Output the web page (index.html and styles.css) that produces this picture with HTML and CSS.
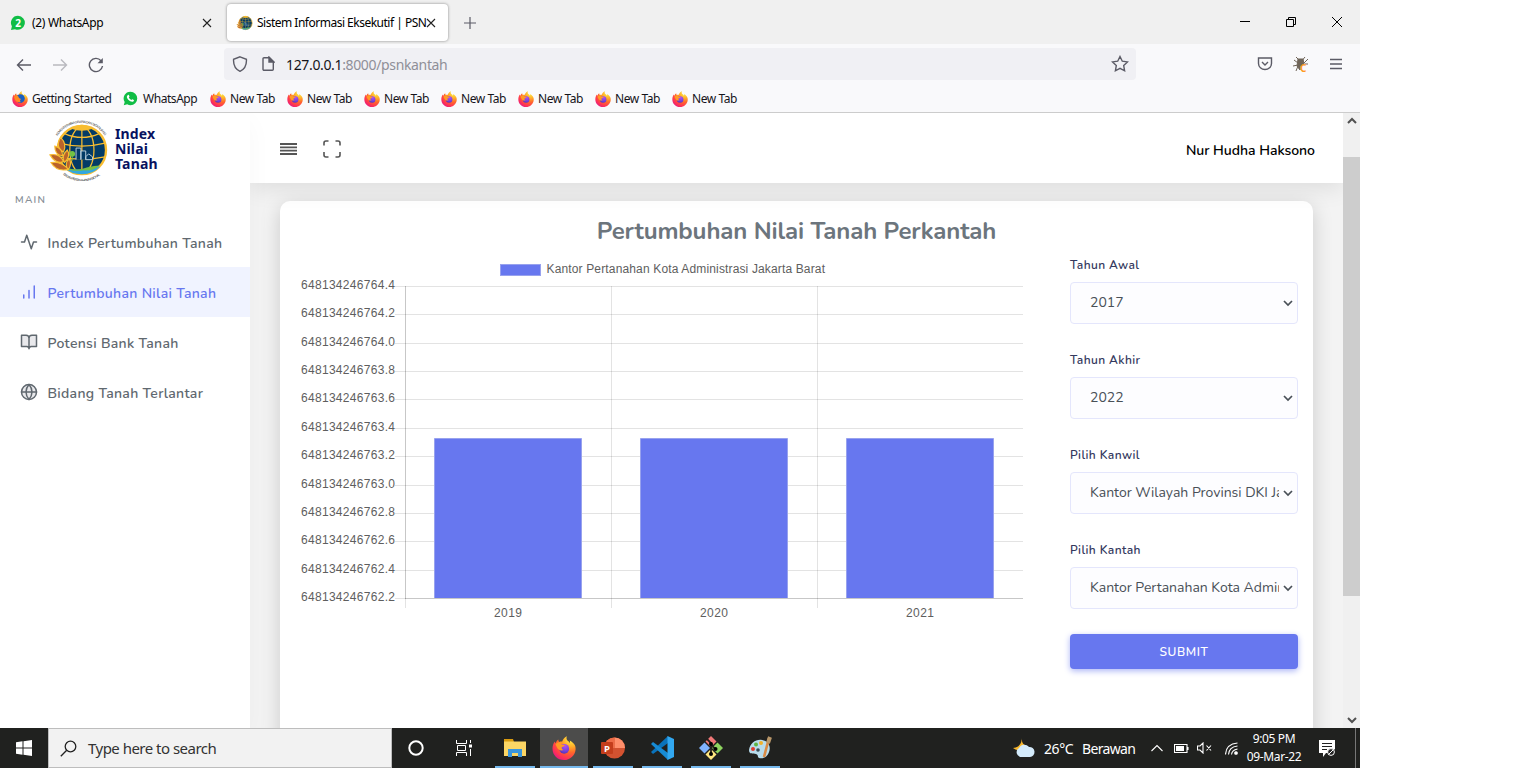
FILE: index.html
```html
<!DOCTYPE html>
<html lang="id">
<head>
<meta charset="utf-8">
<title>Sistem Informasi Eksekutif | PSN</title>
<link rel="stylesheet" href="styles.css">
</head>
<body>
<svg class="defs" width="0" height="0">
  <defs>
    <radialGradient id="ffBody" cx=".8" cy=".1" r="1.05">
      <stop offset="0" stop-color="#fff44f"/><stop offset=".3" stop-color="#ffb52a"/><stop offset=".55" stop-color="#ff6a2a"/><stop offset=".8" stop-color="#ff3650"/><stop offset="1" stop-color="#e31587"/>
    </radialGradient>
    <radialGradient id="ffGlobe" cx=".6" cy=".2" r=".9">
      <stop offset="0" stop-color="#b053f0"/><stop offset=".6" stop-color="#7540dd"/><stop offset="1" stop-color="#4a32a8"/>
    </radialGradient>
    <symbol id="firefox" viewBox="0 0 24 24">
      <path fill="url(#ffBody)" d="M15 .3c-.8 1.500-.6 2.700.2 4 1.200 1 2 1.600 2.800 3 .2-1 0-2-.4-2.700C21.600 6.600 24 9.500 23.600 13.400 23.100 19.500 18 24 12 24 5.500 24 .5 19 .5 12.700c0-3 .8-5.300 2.300-7.300.1.800.3 1.400.7 1.900C4.100 5.700 5 4.400 6.300 3.500c0 1 .3 1.900.9 2.500 1-.4 2-.5 3-.4C11 3 12.800 1.100 15 .3z"/>
      <circle cx="12.200" cy="12.800" r="4.900" fill="url(#ffGlobe)"/>
      <path fill="#ff9a24" d="M3.500 8.500c2-2.200 4.500-2.800 7-2.100-1 .6-1.400 1.200-1.500 2l3.800.6c-.2 1.500-2.300 1.500-3 2.300-.5 1 .3 2.200 1.700 2.700-2.700 1.200-5.600-.2-6.700-3z"/>
    </symbol>
    <symbol id="whatsapp" viewBox="0 0 16 16">
      <path fill="#10bd45" d="M8 .7a7.200 7.200 0 0 1 0 14.400 7.500 7.500 0 0 1-3.500-.9L.8 15.300l1-3.600A7.200 7.200 0 0 1 8 .7z"/>
      <path fill="#fff" d="M5.300 4.200c.5-.4.900-.1 1.100.4l.5 1.200c.1.500-.5.800-.7 1.200.6 1.200 1.500 2 2.800 2.600.4-.2.700-.9 1.100-.8l1.400.7c.4.300.1 1-.2 1.400-1 1-2.300.7-3.600.1-1.500-.8-2.900-2.200-3.500-4-.3-1.100.2-2.200 1.100-2.800z"/>
    </symbol>
    <symbol id="emblem" viewBox="0 0 60 60">
      <circle cx="34" cy="30" r="25" fill="#033b66" stroke="#f8bd31" stroke-width="2.400"/>
      <g fill="none" stroke="#f8bd31" stroke-width="1.300">
        <ellipse cx="34" cy="30" rx="12.500" ry="24"/><path d="M34 6v48M16 13q18 8 36 0M10 23q24 6 48 0M10 37q24 5 48 0"/>
      </g>
      <path d="M26 6q8-4 16 0l3 2q-11 4-22 0z" fill="#f8bd31"/>
      <g fill="#033b66" stroke="#bcd0de" stroke-width="1"><path d="M28 40V28h5v12M33 40V31h5v9M38 40v-3l3-3 4 3v3z"/></g>
      <circle cx="24" cy="34" r="3" fill="#73c444"/><path d="M24 36v5" stroke="#73c444"/>
      <path d="M15 48q18 5 38-1-7 8-19 8-11 0-19-7z" fill="#32a7df"/>
      <path d="M13 46q14 7 26 2 8-2 14-2-8 6-17 5-12 2-21-3z" fill="#75bd43"/>
      <g fill="#ba632b" stroke="#f8bd31" stroke-width="1.200"><path d="M12 17q7 7 3 15-9-5-3-15zM6 26q8 2 8 10-8-1-8-10zM1 35q10-2 14 7-8 3-14-7zM2 43q10-2 18 7-12 3-18-7zM19 30q4 6-3 13-4-7 3-13zM21 39q3 6-1 11-5-5 1-11z"/></g>
    </symbol>
  </defs>
</svg>

<div class="desktop">
  <div class="tabstrip">
    <div class="tab">
      <svg width="16" height="16" viewBox="0 0 16 16"><path fill="#10bd45" d="M8 .8a7 7 0 1 1-3 13.400L1 15l.9-3.700A7 7 0 0 1 8 .8z"/><text x="8" y="11.800" text-anchor="middle" class="badge-num">2</text></svg>
      <span class="tab-title t-wa">(2) WhatsApp</span>
      <svg class="close" width="10" height="10" viewBox="0 0 10 10"><path d="M1 1l8 8M9 1l-8 8"/></svg>
    </div>
    <div class="tab active">
      <svg width="17" height="16"><use href="#emblem" width="17" height="16"/></svg>
      <span class="tab-title t-sie">Sistem Informasi Eksekutif | PSN</span>
      <svg class="close" width="10" height="10" viewBox="0 0 10 10"><path d="M1 1l8 8M9 1l-8 8"/></svg>
    </div>
    <svg class="newtab" width="12" height="12" viewBox="0 0 12 12"><path d="M6 0v12M0 6h12"/></svg>
    <div class="winbtns">
      <svg width="10" height="10" viewBox="0 0 10 10"><path d="M0 4.500h10"/></svg>
      <svg width="10" height="10" viewBox="0 0 10 10"><path d="M.5 2.500h7v7h-7zM2.500 2.500v-2h7v7h-2"/></svg>
      <svg width="10" height="10" viewBox="0 0 10 10"><path d="M0 0l10 10M10 0L0 10"/></svg>
    </div>
  </div>

  <div class="toolbar">
    <div class="navbtns">
      <svg width="16" height="16" viewBox="0 0 16 16"><path d="M15 8H1.500M7 2.500L1.500 8 7 13.500"/></svg>
      <svg class="dim" width="16" height="16" viewBox="0 0 16 16"><path d="M1 8h13.500M9 2.500L14.500 8 9 13.500"/></svg>
      <svg width="16" height="16" viewBox="0 0 16 16"><path d="M14.500 9A6.600 6.600 0 1 1 13 3.700"/><path d="M14.800 1v5.300H9.500z" fill="#5b5b66" stroke="none"/></svg>
    </div>
    <div class="urlbar">
      <svg width="16" height="16" viewBox="0 0 16 16"><path d="M8 .8l6.400 2.500c.4 5.500-1.700 9.700-6.400 12C3.300 13 1.200 8.800 1.600 3.300z"/></svg>
      <svg width="14" height="16" viewBox="0 0 14 16"><path d="M3 1.700h5l4.300 4.300v7.300a1 1 0 0 1-1 1H3a1 1 0 0 1-1-1V2.700a1 1 0 0 1 1-1z"/><path d="M8 1v5h5z" fill="#5b5b66"/></svg>
      <span class="url">127.0.0.1<span>:8000/psnkantah</span></span>
      <svg class="star" width="18" height="18" viewBox="0 0 18 18"><path d="M9 1.500l2.300 4.700 5.200.7-3.800 3.700.9 5.200L9 13.300l-4.600 2.500.9-5.200L1.500 6.900l5.200-.7z"/></svg>
    </div>
    <div class="toolicons">
      <svg width="16" height="16" viewBox="0 0 16 16"><path d="M1.500 2h13v5.500a6.500 6 0 0 1-13 0zM5 6l3 3 3-3"/></svg>
      <svg class="bug" width="16" height="17" viewBox="0 0 16 17"><path d="M3 1l3 3M12 1L9.500 4M1 4l4 3M15 3l-4 4M0 10l5-1M3 15l2-5M12 8l3 0"/><path fill="#6f6458" d="M5 3h5l1 5-4 2v4l-3-4z"/><text x="7" y="15.500">C</text></svg>
      <svg width="14" height="12" viewBox="0 0 14 12"><path d="M1 1.500h12M1 6h12M1 10.500h12"/></svg>
    </div>
  </div>

  <div class="bookmarks">
    <span class="bm b1"><svg width="16" height="16"><use href="#firefox" width="16" height="16"/><circle cx="8.500" cy="7.500" r="4.300" fill="#1b5fc0"/><path d="M2 6q4-3 5 1l2 1q-2 2 0 3-4 1-6-2z" fill="#ff8a20"/></svg><span>Getting Started</span></span>
    <span class="bm b2"><svg width="16" height="16"><use href="#whatsapp" width="15" height="15"/></svg><span>WhatsApp</span></span>
    <span class="bm"><svg width="16" height="16"><use href="#firefox" width="16" height="16"/></svg><span>New Tab</span></span>
    <span class="bm"><svg width="16" height="16"><use href="#firefox" width="16" height="16"/></svg><span>New Tab</span></span>
    <span class="bm"><svg width="16" height="16"><use href="#firefox" width="16" height="16"/></svg><span>New Tab</span></span>
    <span class="bm"><svg width="16" height="16"><use href="#firefox" width="16" height="16"/></svg><span>New Tab</span></span>
    <span class="bm"><svg width="16" height="16"><use href="#firefox" width="16" height="16"/></svg><span>New Tab</span></span>
    <span class="bm"><svg width="16" height="16"><use href="#firefox" width="16" height="16"/></svg><span>New Tab</span></span>
    <span class="bm"><svg width="16" height="16"><use href="#firefox" width="16" height="16"/></svg><span>New Tab</span></span>
  </div>

  <div class="viewport">
    <aside class="sidebar">
      <div class="brand">
        <svg width="62" height="62" viewBox="0 0 62 62">
          <path id="arcTop" d="M9.500 17A28 28 0 0 1 57 17" fill="none"/><path id="arcBot" d="M15 55.500A29.500 29.500 0 0 0 53 55.500" fill="none"/>
          <use href="#emblem" x="0" y="2" width="60" height="58"/>
          <g class="ring"><text><textPath href="#arcTop" textLength="56">KEMENTERIAN AGRARIA DAN TATA RUANG</textPath></text><text><textPath href="#arcBot" textLength="40">BADAN PERTANAHAN NASIONAL</textPath></text></g>
        </svg>
        <div class="brand-name"><span>Index</span><span>Nilai</span><span>Tanah</span></div>
      </div>
      <div class="menu-head">MAIN</div>
      <a class="item m1"><svg width="18" height="18" viewBox="0 0 24 24"><path d="M22 12h-4l-3 9L9 3l-3 9H2"/></svg><span>Index Pertumbuhan Tanah</span></a>
      <a class="item m2 current"><svg width="18" height="18" viewBox="0 0 24 24"><path d="M12 20V10M19 20V4M5 20v-4"/></svg><span>Pertumbuhan Nilai Tanah</span></a>
      <a class="item m3"><svg width="18" height="18" viewBox="0 0 24 24"><path fill="#e9e9ec" d="M2 3h6a4 4 0 0 1 4 4v14a3 3 0 0 0-3-3H2zM22 3h-6a4 4 0 0 0-4 4v14a3 3 0 0 1 3-3h7z"/></svg><span>Potensi Bank Tanah</span></a>
      <a class="item m4"><svg width="18" height="18" viewBox="0 0 24 24"><circle cx="12" cy="12" r="10" fill="#e9e9ec"/><path d="M2 12h20M12 2a15.300 15.300 0 0 1 4 10 15.300 15.300 0 0 1-4 10 15.300 15.300 0 0 1-4-10 15.300 15.300 0 0 1 4-10z"/></svg><span>Bidang Tanah Terlantar</span></a>
    </aside>

    <main class="main">
      <header class="topbar">
        <svg width="17" height="12" viewBox="0 0 17 12"><path d="M0 1h17M0 4.300h17M0 7.700h17M0 11h17" stroke="#555" stroke-width="1.800"/></svg>
        <svg class="full" width="18" height="18" viewBox="0 0 18 18"><path d="M1 5.500V3a2 2 0 0 1 2-2h2.500M12.500 1H15a2 2 0 0 1 2 2v2.500M17 12v3a2 2 0 0 1-2 2h-2.500M5.500 17H3a2 2 0 0 1-2-2v-3" fill="none" stroke="#555" stroke-width="1.600"/></svg>
        <span class="user">Nur Hudha Haksono</span>
      </header>
      <section class="card">
        <h1><span>Pertumbuhan Nilai Tanah Perkantah</span></h1>
        <div class="card-body">
          <svg class="chart" width="740" height="370" viewBox="290 255 740 370">
            <rect x="500.500" y="264.500" width="40" height="11" fill="#6777ef" stroke="#98a2ee"/>
            <text x="546.500" y="273" textLength="278.500">Kantor Pertanahan Kota Administrasi Jakarta Barat</text>
            <path class="grid" d="M395 286.500h628M395 314.500h628M395 343.500h628M395 371.500h628M395 399.500h628M395 428.500h628M395 456.500h628M395 485.500h628M395 513.500h628M395 541.500h628M395 570.500h628M395 598.500h10M611.500 286v322M817.500 286v322M405.500 599v9"/>
            <path class="axis" d="M405.500 286v313M405 598.500h618"/>
            <g class="ticks">
              <text x="301" y="289" textLength="94">648134246764.4</text><text x="301" y="317" textLength="94">648134246764.2</text><text x="301" y="346" textLength="94">648134246764.0</text><text x="301" y="374" textLength="94">648134246763.8</text><text x="301" y="402" textLength="94">648134246763.6</text><text x="301" y="431" textLength="94">648134246763.4</text><text x="301" y="459" textLength="94">648134246763.2</text><text x="301" y="488" textLength="94">648134246763.0</text><text x="301" y="516" textLength="94">648134246762.8</text><text x="301" y="544" textLength="94">648134246762.6</text><text x="301" y="573" textLength="94">648134246762.4</text><text x="301" y="601" textLength="94">648134246762.2</text>
              <text x="494" y="617" textLength="28">2019</text><text x="700" y="617" textLength="28">2020</text><text x="906" y="617" textLength="28">2021</text>
            </g>
            <g class="bars"><path d="M434.500 598V438.500h147V598M640.500 598V438.500h147V598M846.500 598V438.500h147V598"/></g>
          </svg>
          <form class="filters">
            <label class="l1">Tahun Awal</label>
            <div class="select s1"><span>2017</span><svg width="10" height="7" viewBox="0 0 10 7"><path d="M1 1l4 4 4-4"/></svg></div>
            <label class="l2">Tahun Akhir</label>
            <div class="select s1"><span>2022</span><svg width="10" height="7" viewBox="0 0 10 7"><path d="M1 1l4 4 4-4"/></svg></div>
            <label class="l3">Pilih Kanwil</label>
            <div class="select s3"><span>Kantor Wilayah Provinsi DKI Jakarta</span><svg width="10" height="7" viewBox="0 0 10 7"><path d="M1 1l4 4 4-4"/></svg></div>
            <label class="l4">Pilih Kantah</label>
            <div class="select s4"><span>Kantor Pertanahan Kota Administrasi</span><svg width="10" height="7" viewBox="0 0 10 7"><path d="M1 1l4 4 4-4"/></svg></div>
            <button type="button">SUBMIT</button>
          </form>
        </div>
      </section>
    </main>

    <div class="scrollbar">
      <svg width="10" height="7" viewBox="0 0 10 7"><path d="M1 6l4-4 4 4"/></svg>
      <div class="thumb"></div>
      <svg class="down" width="10" height="7" viewBox="0 0 10 7"><path d="M1 1l4 4 4-4"/></svg>
    </div>
  </div>

  <div class="taskbar">
    <div class="start"><svg width="16" height="16" viewBox="0 0 16 16"><path fill="#fff" d="M0 2.200L6.500 1.300v6.200H0zM7.500 1.200L16 0v7.500H7.500zM0 8.500h6.500v6.200L0 13.800zM7.500 8.500H16V16l-8.500-1.200z"/></svg></div>
    <div class="search"><svg width="17" height="17" viewBox="0 0 17 17"><circle cx="10.500" cy="6.500" r="5.300"/><path d="M6.700 10.300L.8 16.200"/></svg><span>Type here to search</span></div>
    <div class="app c"><svg width="16" height="16" viewBox="0 0 16 16"><circle cx="8" cy="8" r="6.700" fill="none" stroke="#fff" stroke-width="2"/></svg></div>
    <div class="app v"><svg width="17" height="16" viewBox="0 0 17 16"><path fill="none" stroke="#fff" d="M.5 0v3.500h10V0M.5 16v-3.500h10V16M1.500 5.500h8v5h-8zM14.500 0v3M14.500 9v7"/><path fill="#fff" d="M13 4.500h3v3h-3z"/></svg></div>
    <div class="app open"><svg width="22" height="20" viewBox="0 0 22 20"><path fill="#d99b10" d="M0 1h9l1 3H0z"/><path fill="#fbd665" d="M0 3.500h22V18H0z"/><path fill="#3a96dd" d="M4 11h14v8h-4v-4H8v4H4z"/></svg></div>
    <div class="app open focus"><svg width="24" height="24"><use href="#firefox" width="24" height="24"/></svg></div>
    <div class="app open"><svg width="24" height="22" viewBox="0 0 24 22"><circle cx="13.500" cy="11" r="10.500" fill="#d35230"/><path fill="#ff8f6b" d="M13.500.5A10.500 10.500 0 0 1 24 11H13.500z"/><path fill="#ed6c47" d="M3 11A10.500 10.500 0 0 1 13.500.5V11z"/><rect y="5" width="12" height="12" rx="1" fill="#c43e1c"/><text x="6" y="14.500" text-anchor="middle" class="ppt">P</text></svg></div>
    <div class="app open"><svg width="24" height="24" viewBox="0 0 24 24"><path fill="#0a73bb" d="M18 0v7L3 18l-2-2z"/><path fill="#178bd4" d="M18 24v-7L3 6 1 8z"/><path fill="#32a8f0" d="M17.500 0L24 3v18l-6.500 3z"/></svg></div>
    <div class="app open"><svg width="24" height="24" viewBox="0 0 24 24"><path fill="#f07878" d="M12 0l5.500 5.500L12 11 6.500 5.500z"/><path fill="#80b3ff" d="M5.500 6.500L11 12l-5.500 5.500L0 12z"/><path fill="#8dd35f" d="M18.500 6.500L24 12l-5.500 5.500L13 12z"/><path fill="#ffe680" d="M12 13l5.500 5.500L12 24l-5.500-5.500z"/><path stroke="#241f1c" stroke-width="1.800" fill="none" d="M8 3l4 4v11M12 8l4 5"/><circle cx="12" cy="18" r="2"/><circle cx="16.500" cy="13" r="2"/><circle cx="12" cy="8" r="2"/></svg></div>
    <div class="app open"><svg width="24" height="24" viewBox="0 0 24 24"><path fill="#b8dcec" d="M1 14C2 7 8 3 14 4c7 1 9 7 7 12-2 6-7 7-10 6-2-1 0-3-3-4s-7 1-7-4z"/><circle cx="5" cy="13" r="2" fill="#e03b30"/><circle cx="8" cy="8.500" r="2" fill="#5fb544"/><circle cx="13" cy="7" r="2" fill="#f0b12c"/><circle cx="10" cy="14" r="1.800" fill="#374a55"/><path d="M21 2l-5 19" stroke="#d98a45" stroke-width="2.600"/><path d="M22 1l-2 6" stroke="#b8976a" stroke-width="4"/></svg></div>
    <div class="tray">
      <svg width="22" height="20" viewBox="0 0 22 20"><path fill="#f8b72c" d="M9 0q-1 6 5 8l-5 4Q4 13 0 10q8 0 9-10z"/><path fill="#d4ebfb" d="M7 19a5 5 0 0 1-1-9 6 6 0 0 1 10-1 5 5 0 0 1 1 10z"/></svg>
      <span class="temp">26°C</span><span class="cond">Berawan</span>
      <svg class="chev" width="12" height="8" viewBox="0 0 12 8"><path d="M.5 7L6 1.500 11.500 7"/></svg>
      <svg class="batt" width="15" height="9" viewBox="0 0 15 9"><path d="M.5.500h12.500v8H.5zM14 3v3"/><path fill="#fff" stroke="none" d="M2 2h8v5H2z"/></svg>
      <svg class="vol" width="15" height="12" viewBox="0 0 15 12"><path d="M.5 4h2.500L6 1v10L3 8H.5zM9.500 3.500l4.500 5M14 3.500l-4.500 5"/></svg>
      <svg class="wifi" width="13" height="13" viewBox="0 0 13 13"><path d="M.5 12.500Q1 2 12.500 1M3.500 12.500Q4 5 12.500 4M6.500 12.500Q7 8 12.500 7"/><circle cx="11" cy="11" r="1.300" fill="#fff"/></svg>
      <div class="clock"><span class="time">9:05 PM</span><span class="date">09-Mar-22</span></div>
      <svg class="note" width="16" height="17" viewBox="0 0 16 17"><path fill="#fff" d="M0 0h16v9l-5 4H7l-3 4v-4H0z"/><path stroke="#222" d="M3 3.500h10M3 6.500h10M3 9.500h5"/><circle cx="12" cy="12" r="3.400" fill="#222" stroke="#fff"/><path stroke="#fff" d="M9.500 14.500l5-5"/></svg>
      <i class="peek"></i>
    </div>
  </div>
</div>
</body>
</html>
```
FILE: styles.css
```css
* { box-sizing: border-box; }
body { margin: 0; background: #fff; overflow: hidden; }
svg { display: block; flex: none; }
.defs { position: absolute; }
.desktop { width: 1360px; height: 768px; display: flex; flex-direction: column; overflow: hidden; font: 12px/16px "Segoe UI", "Noto Sans", sans-serif; color: #15141a; }

/* browser chrome */
.tabstrip { height: 44px; background: #f0f0f0; display: flex; align-items: center; padding-left: 4px; flex: none; }
.tab { width: 222px; height: 37px; padding: 1px 14px 0 6px; display: flex; align-items: center; }
.tab.active { background: #fff; border-radius: 4px; box-shadow: 0 0 3px rgba(0,0,0,.45); padding: 1px 12px 0 9px; margin-left: 1px; width: 221px; }
.tab-title { margin-left: 6px; padding-top: 1px; white-space: nowrap; color: #000; }
.tab.active .tab-title { margin-left: 4px; }
.t-wa { letter-spacing: -.3px; }
.t-sie { letter-spacing: -.5px; }
.close { margin-left: auto; }
.close path { stroke: #222; fill: none; stroke-width: 1.1; }
.badge-num { font: bold 10px "Noto Sans", sans-serif; fill: #fff; }
.newtab { margin: 1px 0 0 16px; }
.newtab path { stroke: #5b5b66; stroke-width: 1.2; }
.winbtns { margin-left: auto; display: flex; gap: 36px; padding-right: 18px; }
.winbtns path { fill: none; stroke: #000; }
.toolbar { height: 42px; background: #f9f9fb; display: flex; align-items: center; flex: none; padding-bottom: 2px; }
.toolbar svg { fill: none; stroke: #5b5b66; stroke-width: 1.4; }
.navbtns { display: flex; gap: 20px; padding: 1px 0 0 16px; width: 224px; }
.navbtns .dim { opacity: .4; }
.urlbar { width: 912px; height: 32px; border-radius: 4px; background: #f0f0f4; display: flex; align-items: center; padding: 0 7px 0 8px; }
.urlbar svg + svg { margin-left: 13px; }
.url { margin-left: 11px; padding-top: 2px; font-size: 14px; color: #15141a; letter-spacing: -.35px; }
.url span { color: #8f8f98; }
.urlbar .star { margin-left: auto; }
.toolicons { display: flex; align-items: center; gap: 20px; margin-left: auto; padding-right: 17px; position: relative; left: -.5px; }
.bug { overflow: visible; }
.bug path { stroke: #6f6458; stroke-width: 1; }
.bug text { font: bold 10px "Noto Sans", sans-serif; fill: #ff9a1f; stroke: none; }
.bookmarks { height: 27px; background: #f9f9fb; border-bottom: 1px solid #ccc; display: flex; align-items: center; padding-left: 12px; flex: none; }
.bm { display: flex; align-items: center; gap: 4px; width: 77px; white-space: nowrap; letter-spacing: -.45px; }
.bm.b1 { width: 111px; }
.bm.b2 { width: 87px; }

/* web page */
.viewport { height: 615px; flex: none; display: flex; font-family: Nunito, Lato, sans-serif; overflow: hidden; }
.sidebar { width: 250px; background: #fff; position: relative; z-index: 2; flex: none; box-shadow: 0 8px 25px rgba(0,0,0,.03); }
.brand { display: flex; height: 71px; padding: 6px 0 0 48px; }
.brand-name { display: flex; flex-direction: column; margin: 7px 0 0 5px; font: bold 14px/15px "Noto Sans", sans-serif; letter-spacing: .15px; color: #07125f; }
.ring text { font: 3.4px "Liberation Sans", sans-serif; fill: #333; }
.menu-head { height: 33px; padding: 8px 15px; font-size: 10px; line-height: 16px; font-weight: 600; letter-spacing: 1.3px; color: #868e96; }
.item { display: flex; align-items: center; height: 50px; padding-left: 20px; font-size: 14px; font-weight: 600; color: #60686f; }
.item svg { fill: none; stroke: #60686f; stroke-width: 2; stroke-linecap: round; stroke-linejoin: round; margin: 0 9.5px 1px 0; }
.item.current { background: #f0f3ff; color: #6777ef; }
.item.current svg { stroke: #6777ef; }
.item span { padding-top: 3px; letter-spacing: .3px; white-space: nowrap; }
.main { width: 1093px; background: #f3f3f3; flex: none; overflow: hidden; position: relative; }
.topbar { height: 70px; background: #fff; display: flex; align-items: center; padding: 2px 28px 0 30px; position: relative; z-index: 1; box-shadow: 0 4px 25px rgba(0,0,0,.1); }
.topbar .full { margin-left: 26px; }
.user { margin-left: auto; padding-top: 4px; font-size: 14px; font-weight: 600; letter-spacing: -.03px; color: #000; }
.card { margin: 18px 30px 0; height: 640px; background: #fff; border-radius: 10px; box-shadow: 0 5px 20px rgba(0,0,0,.17); }
h1 { margin: 0; padding-top: 14px; height: 54px; text-align: center; font-size: 24px; line-height: 32px; font-weight: 700; letter-spacing: -.12px; color: #6c757d; }
.card-body { display: flex; padding-left: 10px; }
.chart text { font: 12px "Liberation Sans", Arial, sans-serif; fill: #5e5e5e; }
.grid, .axis { fill: none; stroke: rgba(0,0,0,.11); }
.axis { stroke: rgba(0,0,0,.22); }
.bars path { fill: #6777ef; stroke: #98a2ee; }
.filters { width: 228px; margin-left: 40px; display: flex; flex-direction: column; }
label { height: 27px; padding-top: 1px; font-size: 12px; line-height: 18px; font-weight: 600; letter-spacing: .4px; color: #34395e; }
.select { height: 42px; margin-bottom: 26px; border: 1px solid #e4e6fc; border-radius: 4px; background: #fdfdff; display: flex; align-items: center; padding: 0 4px 0 19px; font-size: 14px; color: #495057; }
.select span { width: 189px; overflow: hidden; white-space: nowrap; line-height: 20px; }
.select svg { margin: 1px 0 0 4px; fill: none; stroke: #495057; stroke-width: 1.7; }
button { height: 35px; margin-top: -1px; padding: 0; border: 0; border-radius: 4px; background: #6777ef; color: #fff; font: 600 12px/20px Nunito, Lato, sans-serif; letter-spacing: .6px; box-shadow: 0 2px 6px #acb5f6; }
.scrollbar { width: 17px; background: #f0f0f0; display: flex; flex-direction: column; align-items: center; padding: 4px 0; }
.scrollbar svg path { fill: none; stroke: #505050; stroke-width: 2; }
.thumb { width: 17px; height: 439px; margin-top: 33px; background: #cdcdcd; }
.scrollbar .down { margin-top: auto; }

/* taskbar */
.taskbar { height: 40px; background: #20211f; display: flex; color: #fff; flex: none; }
.start { width: 48px; display: grid; place-items: center; }
.search { width: 344px; background: #f2f2f2; border: 1px solid #bdbdbd; display: flex; align-items: center; padding-left: 11px; color: #333; font-size: 15px; }
.search svg { fill: none; stroke: #222; stroke-width: 1.3; }
.search span { margin-left: 11px; letter-spacing: -.52px; }
.app { width: 48px; margin-right: 1px; display: grid; place-items: center; }
.app.v { margin-right: 2px; padding-right: 1px; }
.app.open { background: linear-gradient(#76b9ed, #76b9ed) 50% 100% / 40px 2px no-repeat; }
.app.focus { background: linear-gradient(#76b9ed, #76b9ed) 50% 100% / 48px 2px no-repeat #4c4c4b; }
.ppt { font: bold 9.500px "Noto Sans", sans-serif; fill: #fff; }
.tray { margin-left: auto; display: flex; align-items: center; font-size: 14px; }
.tray svg { fill: none; stroke: none; }
.temp { margin-left: 9px; padding-top: 2px; width: 38px; letter-spacing: -.4px; }
.cond { width: 69px; padding-top: 2px; letter-spacing: -.65px; }
.tray .chev, .tray .batt, .tray .vol, .tray .wifi { stroke: #fff; stroke-width: 1.1; }
.batt { margin-left: 11px; }
.vol { margin-left: 8px; }
.wifi { margin-left: 13px; }
.clock { width: 72px; display: flex; flex-direction: column; align-items: center; font-size: 12px; line-height: 18px; letter-spacing: -.35px; white-space: nowrap; }
.note { margin-left: 9px; }
.peek { width: 1px; height: 40px; margin: 0 4px 0 20px; background: #777; }
```
